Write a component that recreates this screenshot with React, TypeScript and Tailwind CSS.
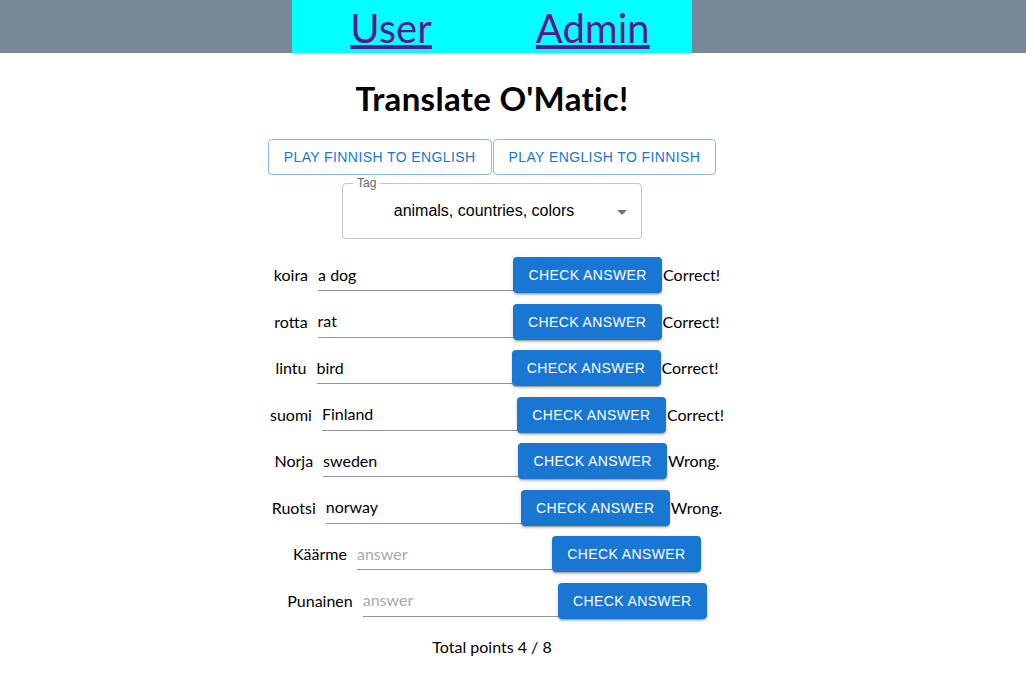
import React from "react";

type Row = { word: string; answer: string; result: string };

const rows: Row[] = [
  { word: "koira", answer: "a dog", result: "Correct!" },
  { word: "rotta", answer: "rat", result: "Correct!" },
  { word: "lintu", answer: "bird", result: "Correct!" },
  { word: "suomi", answer: "Finland", result: "Correct!" },
  { word: "Norja", answer: "sweden", result: "Wrong." },
  { word: "Ruotsi", answer: "norway", result: "Wrong." },
  { word: "Käärme", answer: "", result: "" },
  { word: "Punainen", answer: "", result: "" },
];

const sys = "font-['Lato','Noto_Sans',sans-serif]";
const mui = "font-['Liberation_Sans',Arial,sans-serif]";

function WordRow({ word, answer, result }: Row) {
  return (
    <div className="flex items-center justify-center h-[46.5px] pl-[10px]">
      <span className={`${sys} text-base text-black mr-[10px]`}>{word}</span>
      <div className="w-[195px] h-[32px] flex items-center border-b border-[rgba(0,0,0,0.42)]">
        <input
          defaultValue={answer}
          placeholder="answer"
          className={`${sys} w-full text-base text-black placeholder:text-[#a8a8a8] outline-none bg-transparent`}
        />
      </div>
      <button
        className={`${mui} h-[36px] w-[149px] rounded-[4px] bg-[#1976d2] text-white text-sm uppercase tracking-[0.4px] shadow-[0_3px_1px_-2px_rgba(0,0,0,0.2),0_2px_2px_0_rgba(0,0,0,0.14),0_1px_5px_0_rgba(0,0,0,0.12)]`}
      >
        Check answer
      </button>
      {result && <span className={`${sys} text-base text-black ml-[1px]`}>{result}</span>}
    </div>
  );
}

export default function App() {
  return (
    <div className="bg-white min-h-[674px]">
      <header className="h-[53px] bg-[#778899]">
        <nav className="ml-[292px] w-[400px] h-[53px] bg-[#00ffff] flex items-center justify-center gap-[104px] pl-[16px] pt-[2px]">
          <a href="#" className={`${sys} text-[40px] leading-none text-[#551a8b] underline`}>User</a>
          <a href="#" className={`${sys} text-[40px] leading-none text-[#551a8b] underline`}>Admin</a>
        </nav>
      </header>
      <main className="w-[984px] flex flex-col items-center">
        <h1 className={`${sys} text-[33px] font-bold text-black mt-[25px] leading-[40px] tracking-[0.3px]`}>Translate O'Matic!</h1>
        <div className="flex mt-[21px]">
          <button className={`${mui} h-[36px] px-[15px] border border-[rgba(25,118,210,0.5)] rounded-[4px] text-[#1976d2] text-sm uppercase tracking-[0.4px]`}>
            Play finnish to english
          </button>
          <button className={`${mui} h-[36px] px-[15px] border border-[rgba(25,118,210,0.5)] rounded-[4px] text-[#1976d2] text-sm uppercase tracking-[0.4px] ml-[1px]`}>
            Play english to finnish
          </button>
        </div>
        <div className="relative mt-[8px] w-[300px] h-[56px] border border-[#c4c4c4] rounded-[4px] flex items-center justify-center">
          <span className={`${mui} absolute -top-[8px] left-[10px] px-[4px] bg-white text-xs text-[#666] leading-[14px]`}>Tag</span>
          <span className={`${mui} text-base text-black pr-[16px]`}>animals, countries, colors</span>
          <svg className="absolute right-[7px] top-[16px]" width="24" height="24" viewBox="0 0 24 24">
            <path d="M7 10l5 5 5-5z" fill="#757575" />
          </svg>
        </div>
        <div className="mt-[13px] flex flex-col">
          {rows.map((r) => (
            <WordRow key={r.word} {...r} />
          ))}
        </div>
        <p className={`${sys} text-base text-black mt-[11px]`}>Total points 4 / 8</p>
      </main>
    </div>
  );
}
